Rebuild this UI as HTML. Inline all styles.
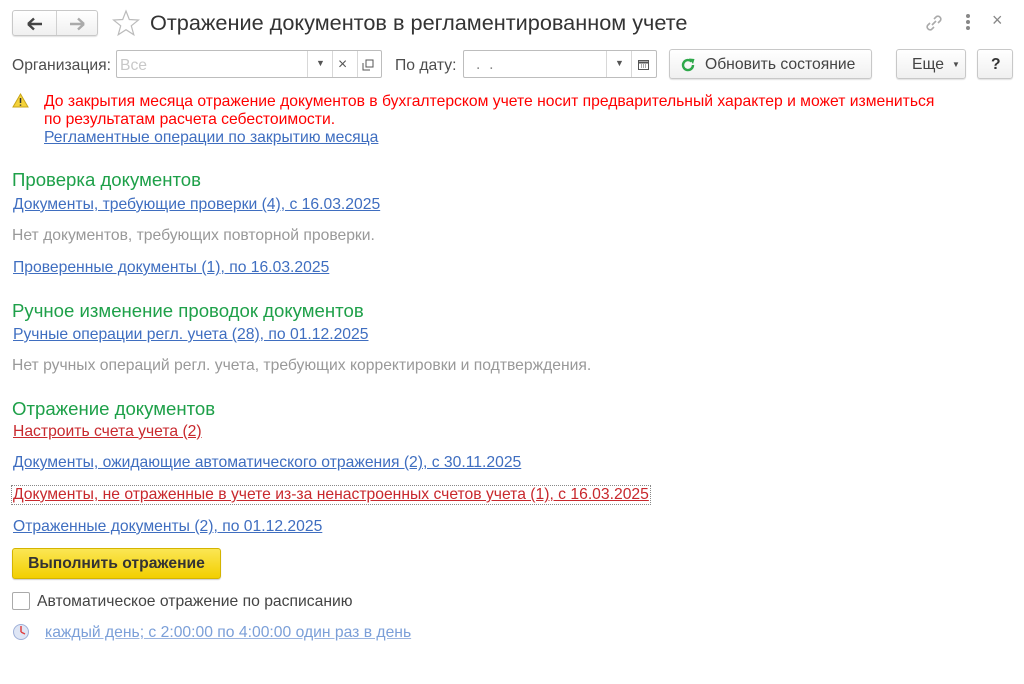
<!DOCTYPE html>
<html><head><meta charset="utf-8"><style>
*{margin:0;padding:0;box-sizing:border-box}
body{width:1024px;height:684px;background:#fff;font-family:"Liberation Sans",Arial,sans-serif;font-size:15.7px;color:#4d4d4d;position:relative;overflow:hidden}
.a{position:absolute;white-space:nowrap}
.lk{color:#3f6ec0;text-decoration:underline;text-decoration-color:#3f6ec0}
.rd{color:#c8282d;text-decoration:underline}
.gr{color:#999}
.h{color:#1ea049;font-size:18.6px}
.btn{position:absolute;border:1px solid #c8c8c8;border-radius:3px;background:linear-gradient(#fff,#f0f0f0);box-shadow:0 1px 1px rgba(0,0,0,.12)}
.fld{position:absolute;border:1px solid #bdbdbd;border-radius:2px;background:#fff;height:28px}
.sep{position:absolute;top:0;bottom:0;border-left:1px solid #d8d8d8}
</style></head><body>
<div class="btn" style="left:12px;top:10px;width:86px;height:26px"><div style="position:absolute;left:43px;top:0;bottom:0;border-left:1px solid #d0d0d0"></div>
<svg class="a" style="left:13px;top:6px" width="18" height="14"><path d="M2 7H16M2 7L8 1.5M2 7L8 12.5" stroke="#444" stroke-width="2.4" fill="none"/></svg>
<svg class="a" style="left:55px;top:6px" width="18" height="14"><path d="M16 7H2M16 7L10 1.5M16 7L10 12.5" stroke="#aaa" stroke-width="2.4" fill="none"/></svg></div>
<svg class="a" style="left:112px;top:9px" width="28" height="28"><path d="M14 2L17.3 10.5 26.5 11 19.3 16.8 21.8 25.8 14 20.7 6.2 25.8 8.7 16.8 1.5 11 10.7 10.5Z" fill="none" stroke="#bbb" stroke-width="1.2"/></svg>
<div class="a" style="left:150px;top:10px;font-size:21.7px;color:#333">Отражение документов в регламентированном учете</div>
<svg class="a" style="left:924px;top:13px" width="20" height="20"><path d="M8 12L12 8M6 10L3.5 12.5a3 3 0 004 4L10 14M10 6l2.5-2.5a3 3 0 014 4L14 10" stroke="#aaa" stroke-width="1.6" fill="none"/></svg>
<div class="a" style="left:966px;top:14px;width:4px"><div style="width:4px;height:4px;background:#888;border-radius:2px;margin-bottom:2px"></div><div style="width:4px;height:4px;background:#888;border-radius:2px;margin-bottom:2px"></div><div style="width:4px;height:4px;background:#888;border-radius:2px"></div></div>
<div class="a" style="left:992px;top:10px;font-size:18px;color:#888">×</div>

<div class="a" style="left:12px;top:57px">Организация:</div>
<div class="fld" style="left:116px;top:50px;width:266px"><span class="a" style="left:3px;top:6px;color:#c8c8c8">Все</span>
<div class="sep" style="left:190px"></div><div class="sep" style="left:215px"></div><div class="sep" style="left:240px"></div>
<span class="a" style="left:199px;top:7px;font-size:9px;color:#555">▼</span>
<span class="a" style="left:221px;top:5px;color:#555">×</span>
<svg class="a" style="left:245px;top:8px" width="12" height="12"><rect x="4" y="1" width="7" height="7" fill="none" stroke="#555"/><path d="M1 4V11H8" fill="none" stroke="#555"/></svg></div>
<div class="a" style="left:395px;top:57px">По дату:</div>
<div class="fld" style="left:463px;top:50px;width:194px"><span class="a" style="left:12px;top:5px;color:#888">.&nbsp;&nbsp;.</span>
<div class="sep" style="left:142px"></div><div class="sep" style="left:167px"></div>
<span class="a" style="left:151px;top:7px;font-size:9px;color:#555">▼</span>
<svg class="a" style="left:174px;top:8px" width="11" height="11"><rect x="0.5" y="1.5" width="10" height="9" fill="none" stroke="#555"/><path d="M0.5 3.5H10.5" stroke="#555" stroke-width="2"/><path d="M3 6h1M5 6h1M7 6h1M3 8h1M5 8h1M7 8h1" stroke="#555"/></svg></div>
<div class="btn" style="left:669px;top:49px;width:203px;height:30px"><svg class="a" style="left:10px;top:7px" width="16" height="16"><path d="M13 8A5 5 0 1 1 11.5 4.5" stroke="#2ea84a" stroke-width="2.4" fill="none"/><path d="M9 1.5L14.5 2 13 7Z" fill="#2ea84a"/></svg><span class="a" style="left:35px;top:6px;color:#444">Обновить состояние</span></div>
<div class="btn" style="left:896px;top:49px;width:70px;height:30px"><span class="a" style="left:15px;top:6px;color:#444">Еще</span><span class="a" style="left:55px;top:10px;font-size:8px">▼</span></div>
<div class="btn" style="left:977px;top:49px;width:36px;height:30px"><span class="a" style="left:13px;top:6px;color:#333;font-weight:bold">?</span></div>

<svg class="a" style="left:12px;top:93px" width="17" height="15"><path d="M8.5 1L16 14H1Z" fill="#f5d33a" stroke="#c9a51a"/><path d="M8.5 5V10M8.5 11.5V12.8" stroke="#333" stroke-width="1.5"/></svg>
<div class="a" style="left:44px;top:93px;color:#f00;line-height:18px">До закрытия месяца отражение документов в бухгалтерском учете носит предварительный характер и может измениться<br>по результатам расчета себестоимости.<br><span class="lk">Регламентные операции по закрытию месяца</span></div>

<div class="a h" style="left:12px;top:169px">Проверка документов</div>
<div class="a lk" style="left:13px;top:196px">Документы, требующие проверки (4), с 16.03.2025</div>
<div class="a gr" style="left:12px;top:227px">Нет документов, требующих повторной проверки.</div>
<div class="a lk" style="left:13px;top:259px">Проверенные документы (1), по 16.03.2025</div>

<div class="a h" style="left:12px;top:300px">Ручное изменение проводок документов</div>
<div class="a lk" style="left:13px;top:326px">Ручные операции регл. учета (28), по 01.12.2025</div>
<div class="a gr" style="left:12px;top:357px">Нет ручных операций регл. учета, требующих корректировки и подтверждения.</div>

<div class="a h" style="left:12px;top:398px">Отражение документов</div>
<div class="a rd" style="left:13px;top:423px">Настроить счета учета (2)</div>
<div class="a lk" style="left:13px;top:454px">Документы, ожидающие автоматического отражения (2), с 30.11.2025</div>
<div class="a rd" style="left:11px;top:485px;border:1px dotted #888;padding:0 1px">Документы, не отраженные в учете из-за ненастроенных счетов учета (1), с 16.03.2025</div>
<div class="a lk" style="left:13px;top:518px">Отраженные документы (2), по 01.12.2025</div>

<div class="a" style="left:12px;top:548px;width:209px;height:31px;border:1px solid #d4b400;border-radius:3px;background:linear-gradient(#fbe654,#f2cf00);box-shadow:0 1px 1px rgba(0,0,0,.2);text-align:center;line-height:30px;font-weight:bold;color:#333">Выполнить отражение</div>
<div class="a" style="left:12px;top:592px;width:18px;height:18px;border:1px solid #aaa;border-radius:2px"></div>
<div class="a" style="left:37px;top:593px;color:#444">Автоматическое отражение по расписанию</div>
<svg class="a" style="left:12px;top:623px" width="18" height="18"><circle cx="9" cy="9" r="7.5" fill="#dfe6f5" stroke="#9fb0d8"/><path d="M9 9V3M9 9L13 11" stroke="#e04040" stroke-width="1.5"/></svg>
<div class="a lk" style="left:45px;top:624px;color:#7b9fd8;text-decoration-color:#9bb5e0">каждый день; с 2:00:00 по 4:00:00 один раз в день</div>
</body></html>
